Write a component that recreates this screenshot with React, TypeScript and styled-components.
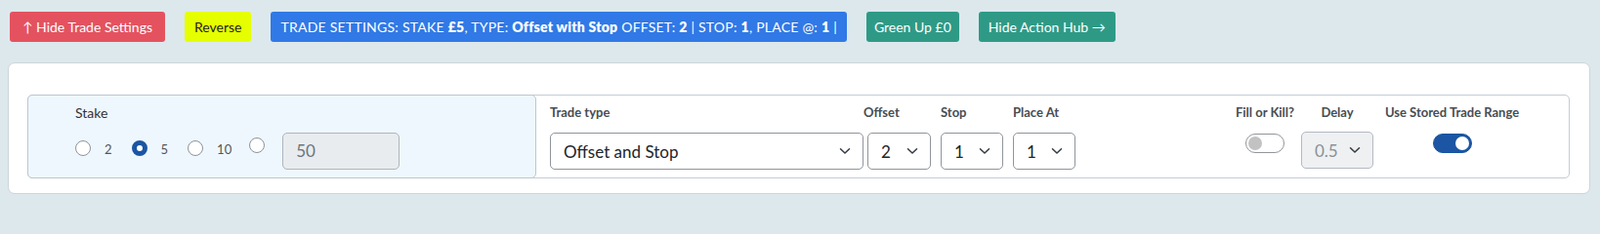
import React from "react";
import styled, { createGlobalStyle } from "styled-components";

const GlobalStyle = createGlobalStyle`
  body {
    margin: 0;
    background: #dde8ed;
    font-family: Lato, "Noto Sans", sans-serif;
  }
`;

const Page = styled.div`
  width: 1638px;
  height: 208px;
  box-sizing: border-box;
  padding: 12px 10px 0 8px;
`;

const TopBar = styled.div`
  display: flex;
  gap: 20px;
  padding-left: 2px;
`;

const TopButton = styled.button<{ $bg: string; $fg?: string; $px?: number; $ls?: number }>`
  height: 31px;
  padding: 0 ${(p) => p.$px ?? 10}px;
  border: none;
  border-radius: 3px;
  background: ${(p) => p.$bg};
  color: ${(p) => p.$fg || "#fff"};
  font-family: inherit;
  font-size: 14px;
  letter-spacing: ${(p) => p.$ls ?? 0}px;
  white-space: nowrap;
  b {
    font-weight: 800;
  }
`;

const Card = styled.div`
  margin-top: 21px;
  background: #fff;
  border: 1px solid #cdd5db;
  border-radius: 7px;
  padding: 32px 20px 15px 19px;
`;

const Inner = styled.div`
  display: flex;
  height: 86px;
  box-sizing: border-box;
  border: 1px solid #c3ccd4;
  border-radius: 5px;
`;

const StakePanel = styled.div`
  width: 521px;
  margin: -1px 0 -1px -1px;
  box-sizing: border-box;
  background: #eff7fe;
  border: 1px solid #bcc6cf;
  border-radius: 5px;
  padding: 9px 0 0 48px;
`;

const StakeLabel = styled.div`
  font-size: 14px;
  color: #333;
  line-height: 18px;
`;

const StakeRow = styled.div`
  display: flex;
  align-items: flex-start;
  margin-top: 11px;
`;

const RadioItem = styled.label<{ $gap: number; $top?: number }>`
  display: flex;
  align-items: center;
  margin-top: ${(p) => p.$top ?? 6}px;
  margin-right: ${(p) => p.$gap}px;
  font-size: 13px;
  color: #555;
`;

const RadioText = styled.span`
  margin-left: 14px;
  padding-top: 3px;
`;

const Radio = styled.span<{ $on?: boolean }>`
  width: 16px;
  height: 16px;
  box-sizing: border-box;
  border-radius: 50%;
  background: #fff;
  border: ${(p) => (p.$on ? "5px solid #1b55a3" : "1px solid #8d939a")};
`;

const AmountInput = styled.div`
  width: 120px;
  height: 38px;
  box-sizing: border-box;
  border: 1px solid #adb5bd;
  border-radius: 5px;
  background: #e9ecef;
  color: #6c757d;
  font-size: 17px;
  line-height: 36px;
  padding-left: 13px;
`;

const Field = styled.div<{ $ml: number; $width: number; $center?: boolean }>`
  display: flex;
  flex-direction: column;
  align-items: ${(p) => (p.$center ? "center" : "flex-start")};
  width: ${(p) => p.$width}px;
  margin-left: ${(p) => p.$ml}px;
  padding-top: 8px;
`;

const FieldLabel = styled.div<{ $mb?: number; $shift?: number }>`
  font-size: 13px;
  font-weight: 700;
  color: #474d53;
  line-height: 18px;
  margin-bottom: ${(p) => p.$mb ?? 12}px;
  margin-left: ${(p) => p.$shift ?? 0}px;
  white-space: nowrap;
`;

const Select = styled.div<{ $disabled?: boolean }>`
  display: flex;
  align-items: center;
  justify-content: space-between;
  width: 100%;
  height: 38px;
  box-sizing: border-box;
  border: 1px solid ${(p) => (p.$disabled ? "#b3bac1" : "#8f959b")};
  border-radius: 5px;
  background: ${(p) => (p.$disabled ? "#eef0f2" : "#fff")};
  color: ${(p) => (p.$disabled ? "#8a9096" : "#212529")};
  font-size: 17px;
  padding: 0 12px 0 13px;
`;

const RightGroup = styled.div`
  display: flex;
  margin-left: auto;
  padding-right: 51px;
`;

const Toggle = styled.div<{ $on?: boolean }>`
  position: relative;
  width: 40px;
  height: 20px;
  box-sizing: border-box;
  margin-top: 1px;
  border-radius: 10px;
  background: ${(p) => (p.$on ? "#1b55a3" : "#fff")};
  border: 1px solid ${(p) => (p.$on ? "#1b55a3" : "#8f959b")};
  &::after {
    content: "";
    position: absolute;
    top: 2px;
    left: ${(p) => (p.$on ? "22px" : "2px")};
    width: 14px;
    height: 14px;
    border-radius: 50%;
    background: ${(p) => (p.$on ? "#fff" : "#c2c2c2")};
  }
`;

function Chevron() {
  return (
    <svg width="12" height="8" viewBox="0 0 12 8">
      <path d="M1.5 1.8 L6 6 L10.5 1.8" fill="none" stroke="#343a40" strokeWidth="1.5" strokeLinecap="round" strokeLinejoin="round" />
    </svg>
  );
}

const stakes = [
  { value: "2", gap: 20 },
  { value: "5", gap: 20, on: true },
  { value: "10", gap: 18 },
];

const selects = [
  { label: "Trade type", value: "Offset and Stop", width: 321, ml: 14, shift: 0 },
  { label: "Offset", value: "2", width: 65, ml: 4, shift: -4 },
  { label: "Stop", value: "1", width: 64, ml: 10, shift: 0 },
  { label: "Place At", value: "1", width: 64, ml: 10, shift: 0 },
];

function App() {
  return (
    <Page>
      <GlobalStyle />
      <TopBar>
        <TopButton $bg="#e4525f" $px={13}>↑ Hide Trade Settings</TopButton>
        <TopButton $bg="#e6ff00" $fg="#222">Reverse</TopButton>
        <TopButton $bg="#3079e6" $ls={0.24}>
          TRADE SETTINGS: STAKE <b>£5</b>, TYPE: <b>Offset with Stop</b> OFFSET: <b>2</b> | STOP: <b>1</b>, PLACE @: <b>1</b> |
        </TopButton>
        <TopButton $bg="#2e9a86" $px={8}>Green Up £0</TopButton>
        <TopButton $bg="#2e9a86">Hide Action Hub →</TopButton>
      </TopBar>
      <Card>
        <Inner>
          <StakePanel>
            <StakeLabel>Stake</StakeLabel>
            <StakeRow>
              {stakes.map((s) => (
                <RadioItem key={s.value} $gap={s.gap}>
                  <Radio $on={s.on} />
                  <RadioText>{s.value}</RadioText>
                </RadioItem>
              ))}
              <RadioItem $gap={18} $top={5}>
                <Radio />
              </RadioItem>
              <AmountInput>50</AmountInput>
            </StakeRow>
          </StakePanel>
          {selects.map((s) => (
            <Field key={s.label} $width={s.width} $ml={s.ml}>
              <FieldLabel $shift={s.shift}>{s.label}</FieldLabel>
              <Select>
                {s.value}
                <Chevron />
              </Select>
            </Field>
          ))}
          <RightGroup>
            <Field $width={58} $ml={0} $center>
              <FieldLabel>Fill or Kill?</FieldLabel>
              <Toggle />
            </Field>
            <Field $width={74} $ml={8} $center>
              <FieldLabel $mb={11}>Delay</FieldLabel>
              <Select $disabled>
                0.5
                <Chevron />
              </Select>
            </Field>
            <Field $width={137} $ml={12} $center>
              <FieldLabel>Use Stored Trade Range</FieldLabel>
              <Toggle $on />
            </Field>
          </RightGroup>
        </Inner>
      </Card>
    </Page>
  );
}

export default App;
